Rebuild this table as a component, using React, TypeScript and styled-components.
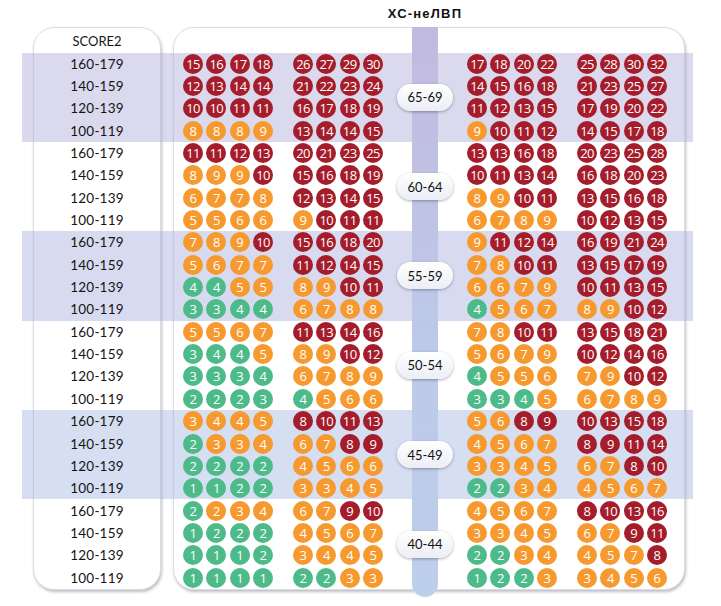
import React from 'react';
import styled, { createGlobalStyle } from 'styled-components';

const GlobalStyle = createGlobalStyle`
  html, body {
    margin: 0;
    padding: 0;
    background: #fff;
  }
  body {
    font-family: Lato, "Open Sans", sans-serif;
    color: #141414;
  }
`;

type Tone = 'low' | 'mid' | 'high';

const TONES: Record<Tone, string> = {
  low: '#4dba8a',
  mid: '#f6992e',
  high: '#a51c2b',
};

const BANDS = ['rgba(176, 170, 218, 0.45)', 'rgba(168, 176, 222, 0.45)', 'rgba(164, 182, 226, 0.45)'];

const AGES = ['65-69', '60-64', '55-59', '50-54', '45-49', '40-44'];
const PRESSURES = ['160-179', '140-159', '120-139', '100-119'];

// one line per row, four column groups split by |
const ROWS = [
  '15 16 17 18|26 27 29 30|17 18 20 22|25 28 30 32',
  '12 13 14 14|21 22 23 24|14 15 16 18|21 23 25 27',
  '10 10 11 11|16 17 18 19|11 12 13 15|17 19 20 22',
  '8 8 8 9|13 14 14 15|9 10 11 12|14 15 17 18',
  '11 11 12 13|20 21 23 25|13 13 16 18|20 23 25 28',
  '8 9 9 10|15 16 18 19|10 11 13 14|16 18 20 23',
  '6 7 7 8|12 13 14 15|8 9 10 11|13 15 16 18',
  '5 5 6 6|9 10 11 11|6 7 8 9|10 12 13 15',
  '7 8 9 10|15 16 18 20|9 11 12 14|16 19 21 24',
  '5 6 7 7|11 12 14 15|7 8 10 11|13 15 17 19',
  '4 4 5 5|8 9 10 11|6 6 7 9|10 11 13 15',
  '3 3 4 4|6 7 8 8|4 5 6 7|8 9 10 12',
  '5 5 6 7|11 13 14 16|7 8 10 11|13 15 18 21',
  '3 4 4 5|8 9 10 12|5 6 7 9|10 12 14 16',
  '3 3 3 4|6 7 8 9|4 5 5 6|7 9 10 12',
  '2 2 2 3|4 5 6 6|3 3 4 5|6 7 8 9',
  '3 4 4 5|8 10 11 13|5 6 8 9|10 13 15 18',
  '2 3 3 4|6 7 8 9|4 5 6 7|8 9 11 14',
  '2 2 2 2|4 5 6 6|3 3 4 5|6 7 8 10',
  '1 1 2 2|3 3 4 5|2 2 3 4|4 5 6 7',
  '2 2 3 4|6 7 9 10|4 5 6 7|8 10 13 16',
  '1 2 2 2|4 5 6 7|3 3 4 5|6 7 9 11',
  '1 1 1 2|3 4 4 5|2 2 3 4|4 5 7 8',
  '1 1 1 1|2 2 3 3|1 2 2 3|3 4 5 6',
];

const OVERRIDES: Record<string, Tone> = { '20-0-1': 'mid' };

const GROUP_COLUMNS = [5, 7, 11, 13];
const FIRST_ROW = 3;

const toneFor = (value: number, row: number, group: number, index: number): Tone => {
  const forced = OVERRIDES[`${row}-${group}-${index}`];
  if (forced) return forced;
  const young = row >= 16;
  const [low, high] = young ? [3, 8] : [5, 10];
  if (value < low) return 'low';
  if (value < high) return 'mid';
  return 'high';
};

const Chart = styled.div`
  display: grid;
  grid-template-columns: 11px 128px 12px 10px 90px 20px 90px 29px 26px 29px 90px 20px 90px 18px 8px;
  grid-template-rows: 27px 25.5px repeat(24, 22.35px) 1px 7px;
  margin-left: 22px;
`;

const Title = styled.div`
  grid-column: 7 / 12;
  grid-row: 1;
  justify-self: center;
  align-self: end;
  padding-bottom: 6px;
  font-family: "Liberation Sans", Arial, sans-serif;
  font-weight: 700;
  font-size: 13px;
  letter-spacing: 1.2px;
  color: #111;
`;

const Panel = styled.div<{ $from: number; $to: number }>`
  grid-column: ${(p) => p.$from} / ${(p) => p.$to};
  grid-row: 2 / 28;
  background: #fff;
  border: 1px solid #dcdce6;
  border-radius: 21px;
  box-shadow: 1px 2px 3px rgba(70, 70, 90, 0.35);
`;

const Band = styled.div<{ $row: number; $tint: string }>`
  grid-column: 1 / -1;
  grid-row: ${(p) => p.$row} / span 4;
  background: ${(p) => p.$tint};
`;

const Bar = styled.div`
  grid-column: 9;
  grid-row: 2 / 29;
  background: linear-gradient(#c2badf, #bdc9e8 55%, #bccfeb);
  border-radius: 0 0 13px 13px;
`;

const AgePill = styled.div<{ $row: number }>`
  grid-column: 8 / 11;
  grid-row: ${(p) => p.$row} / span 4;
  justify-self: center;
  align-self: center;
  width: 56px;
  height: 27px;
  display: flex;
  align-items: center;
  justify-content: center;
  border-radius: 14px;
  background: linear-gradient(#ffffff, #eceef5);
  box-shadow: 0 1px 3px rgba(40, 40, 70, 0.4);
  font-size: 13px;
  color: #111;
`;

const Heading = styled.div`
  grid-column: 2;
  grid-row: 2;
  display: flex;
  align-items: center;
  justify-content: center;
  padding-top: 2px;
  font-size: 13px;
`;

const Pressure = styled.div<{ $row: number }>`
  grid-column: 2;
  grid-row: ${(p) => p.$row};
  display: flex;
  align-items: center;
  justify-content: center;
  font-size: 13.5px;
  letter-spacing: 0.2px;
`;

const DotGroup = styled.div<{ $row: number; $col: number }>`
  grid-column: ${(p) => p.$col};
  grid-row: ${(p) => p.$row};
  display: flex;
  align-items: center;
  justify-content: space-between;
`;

const Dot = styled.span<{ $tone: Tone }>`
  width: 20px;
  height: 20px;
  border-radius: 50%;
  background: ${(p) => TONES[p.$tone]};
  color: #fff;
  display: flex;
  align-items: center;
  justify-content: center;
  font-family: "Open Sans", sans-serif;
  font-size: 13px;
  letter-spacing: -0.6px;
`;

export default function App() {
  return (
    <>
      <GlobalStyle />
      <Chart>
        <Title>ХС-неЛВП</Title>
        <Panel $from={2} $to={3} />
        <Panel $from={4} $to={15} />
        {[0, 2, 4].map((age, i) => (
          <Band key={age} $row={FIRST_ROW + age * 4} $tint={BANDS[i]} />
        ))}
        <Bar />
        {AGES.map((age, i) => (
          <AgePill key={age} $row={FIRST_ROW + i * 4}>
            {age}
          </AgePill>
        ))}
        <Heading>SCORE2</Heading>
        {ROWS.map((line, r) => (
          <React.Fragment key={r}>
            <Pressure $row={FIRST_ROW + r}>{PRESSURES[r % 4]}</Pressure>
            {line.split('|').map((chunk, g) => (
              <DotGroup key={g} $row={FIRST_ROW + r} $col={GROUP_COLUMNS[g]}>
                {chunk.split(' ').map((v, k) => (
                  <Dot key={k} $tone={toneFor(Number(v), r, g, k)}>
                    {v}
                  </Dot>
                ))}
              </DotGroup>
            ))}
          </React.Fragment>
        ))}
      </Chart>
    </>
  );
}
